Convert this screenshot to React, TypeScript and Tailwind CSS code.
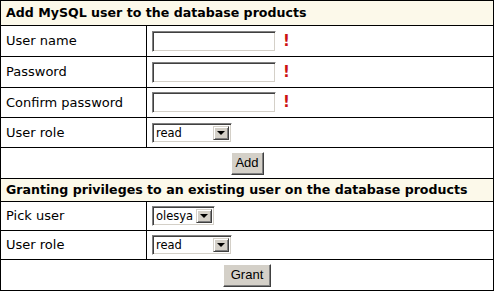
const verdana = { fontFamily: '"DejaVu Sans", Verdana, sans-serif' };

function TextBox() {
  return (
    <div className="flex items-center gap-[7px]">
      <input
        type="text"
        className="h-[21px] w-[124px] border border-t-[#808080] border-l-[#808080] border-b-[#ffffff] border-r-[#ffffff] bg-white shadow-[inset_1px_1px_0_#404040,inset_-1px_-1px_0_#d4d0c8] outline-none"
      />
      <span className="text-[15px] font-bold leading-none text-[#cc1111]">!</span>
    </div>
  );
}

function Select({ value, width }: { value: string; width: string }) {
  return (
    <div
      className={`flex h-[20px] ${width} items-stretch border border-t-[#808080] border-l-[#808080] border-b-[#ffffff] border-r-[#ffffff] bg-white shadow-[inset_1px_1px_0_#404040,inset_-1px_-1px_0_#d4d0c8] p-[2px]`}
    >
      <span className="flex-1 overflow-hidden pl-[1px] text-[11.5px] leading-[14px]" style={verdana}>
        {value}
      </span>
      <span className="flex w-[16px] shrink-0 items-center justify-center border border-t-[#d4d0c8] border-l-[#d4d0c8] border-b-[#404040] border-r-[#404040] bg-[#d4d0c8] shadow-[inset_1px_1px_0_#ffffff,inset_-1px_-1px_0_#808080]">
        <span className="h-0 w-0 border-x-[4px] border-t-[4px] border-x-transparent border-t-black" />
      </span>
    </div>
  );
}

function Button({ label, w }: { label: string; w: string }) {
  return (
    <button
      type="button"
      className={`h-[23px] ${w} border border-t-[#ffffff] border-l-[#ffffff] border-b-[#404040] border-r-[#404040] bg-[#d4d0c8] text-[13px] text-black shadow-[inset_-1px_-1px_0_#808080,inset_1px_1px_0_#d4d0c8]`}
      style={{ fontFamily: '"Liberation Sans", Arial, sans-serif' }}
    >
      {label}
    </button>
  );
}

export default function App() {
  const cell = 'border border-black px-[5px]';
  return (
    <div className="bg-white" style={verdana}>
      <table className="w-[494px] border-collapse text-[13px] text-black">
        <tbody>
          <tr className="h-[25px] bg-[#fcf9ea]">
            <td colSpan={2} className={`${cell} text-[12.6px] font-bold`}>
              Add MySQL user to the database products
            </td>
          </tr>
          <tr className="h-[31px]">
            <td className={`${cell} w-[146px]`}>User name</td>
            <td className={cell}>
              <TextBox />
            </td>
          </tr>
          <tr className="h-[31px]">
            <td className={cell}>Password</td>
            <td className={cell}>
              <TextBox />
            </td>
          </tr>
          <tr className="h-[30px]">
            <td className={cell}>Confirm password</td>
            <td className={cell}>
              <TextBox />
            </td>
          </tr>
          <tr className="h-[30px]">
            <td className={cell}>User role</td>
            <td className={cell}>
              <Select value="read" width="w-[80px]" />
            </td>
          </tr>
          <tr className="h-[31px]">
            <td colSpan={2} className={`${cell} text-center`}>
              <Button label="Add" w="w-[33px]" />
            </td>
          </tr>
          <tr className="h-[23px] bg-[#fcf9ea]">
            <td colSpan={2} className={`${cell} text-[12.6px] font-bold`}>
              Granting privileges to an existing user on the database products
            </td>
          </tr>
          <tr className="h-[29px]">
            <td className={cell}>Pick user</td>
            <td className={cell}>
              <Select value="olesya" width="w-[63px]" />
            </td>
          </tr>
          <tr className="h-[29px]">
            <td className={cell}>User role</td>
            <td className={cell}>
              <Select value="read" width="w-[80px]" />
            </td>
          </tr>
          <tr className="h-[31px]">
            <td colSpan={2} className={`${cell} text-center`}>
              <Button label="Grant" w="w-[48px]" />
            </td>
          </tr>
        </tbody>
      </table>
    </div>
  );
}
